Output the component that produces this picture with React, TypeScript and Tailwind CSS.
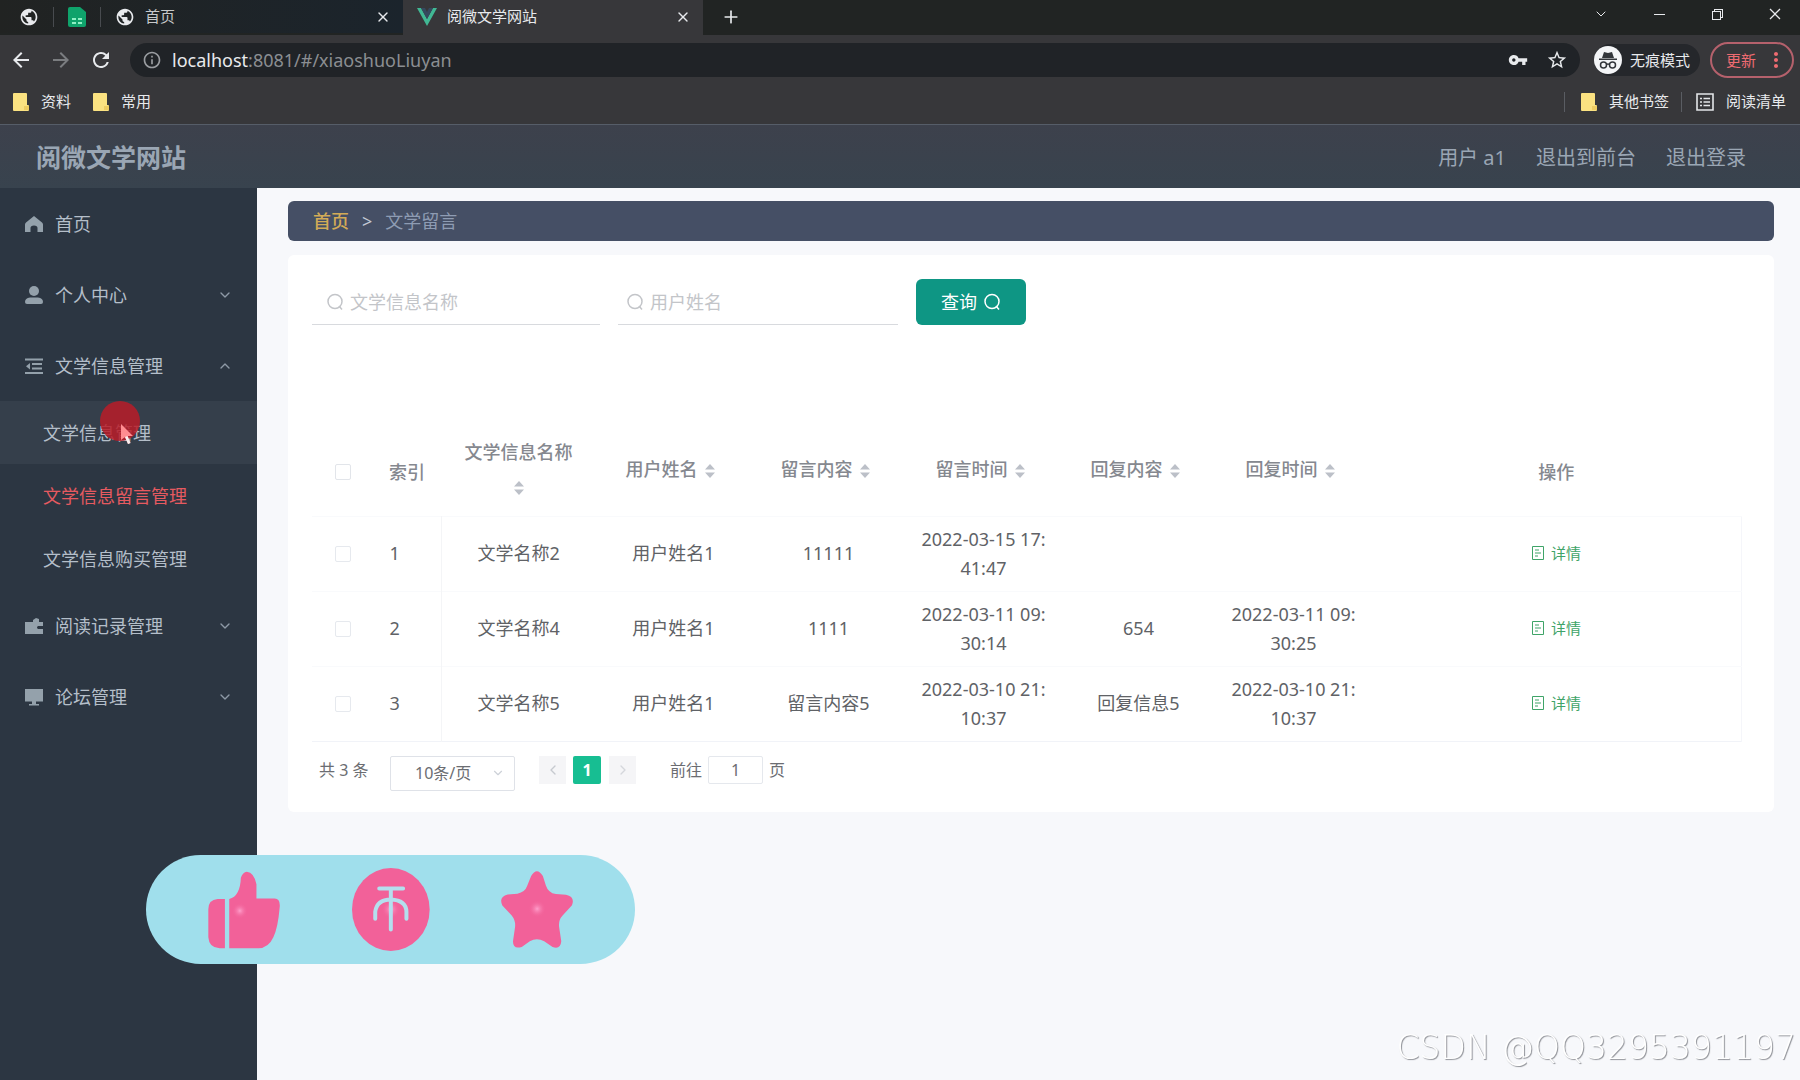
import React from 'react';
import {
  MdArrowBack,
  MdArrowForward,
  MdInfoOutline,
  MdMoreVert,
  MdPublic,
  MdRefresh,
  MdStarBorder,
  MdVpnKey,
} from 'react-icons/md';
import { VscChromeClose, VscChromeMinimize, VscChromeRestore } from 'react-icons/vsc';
import { ChevronDown, ChevronLeft, ChevronRight, ChevronUp, Plus, X } from 'lucide-react';

const rows = [
  { id: 1, name: '文学名称2', user: '用户姓名1', content: '11111', time: '2022-03-15 17:41:47', reply: '', replyTime: '' },
  { id: 2, name: '文学名称4', user: '用户姓名1', content: '1111', time: '2022-03-11 09:30:14', reply: '654', replyTime: '2022-03-11 09:30:25' },
  { id: 3, name: '文学名称5', user: '用户姓名1', content: '留言内容5', time: '2022-03-10 21:10:37', reply: '回复信息5', replyTime: '2022-03-10 21:10:37' },
];

const sortable = ['文学信息名称', '用户姓名', '留言内容', '留言时间', '回复内容', '回复时间'];

function FolderIcon() {
  return (
    <svg viewBox="0 0 16 18" className="w-4 h-[18px]">
      <path d="M1 0h12a1 1 0 0 1 1 1v11h1a1 1 0 0 1 1 1v4a1 1 0 0 1-1 1H1a1 1 0 0 1-1-1V1a1 1 0 0 1 1-1z" fill="#fbe281" />
      <path d="M11 13h5v4h-5z" fill="#efcd62" />
    </svg>
  );
}

function SheetIcon() {
  return (
    <svg viewBox="0 0 18 20" className="w-[18px] h-5">
      <path d="M2 0h10l6 5v13a2 2 0 0 1-2 2H2a2 2 0 0 1-2-2V2a2 2 0 0 1 2-2z" fill="#0fa36b" />
      <path d="M4 11h4v2H4zM10 11h4v2h-4zM4 15h4v2H4zM10 15h4v2h-4z" fill="#8ef0c4" />
    </svg>
  );
}

function VueIcon() {
  return (
    <svg viewBox="0 0 20 18" className="w-5 h-[18px]">
      <path d="M0 0h4l6 11L16 0h4L10 18z" fill="#41b894" />
      <path d="M4 0h4l2 4 2-4h4l-6 11z" fill="#35495e" />
    </svg>
  );
}

function IncognitoIcon() {
  return (
    <svg viewBox="0 0 28 28" className="w-7 h-7">
      <circle cx="14" cy="14" r="14" fill="#f4f5f7" />
      <path d="M10 6l4 1 4-1 2 6H8zM5 12.500h18v1.500H5z" fill="#33363b" />
      <g fill="none" stroke="#33363b" strokeWidth="1.500">
        <circle cx="9.500" cy="19" r="3" />
        <circle cx="18.500" cy="19" r="3" />
        <path d="M12.500 18.500q1.500-1 3 0" />
      </g>
    </svg>
  );
}

function ReadingListIcon() {
  return (
    <svg viewBox="0 0 18 18" className="w-[18px] h-[18px]" fill="none" stroke="#e4e6e9">
      <path d="M1 1h16v16H1z" strokeWidth="1.600" />
      <path d="M4 5.500h2M4 9h2M4 12.500h2M7.500 5.500h6.500M7.500 9h6.500M7.500 12.500h6.500" strokeWidth="1.500" />
    </svg>
  );
}

function HomeIcon() {
  return (
    <svg viewBox="0 0 18 18" className="w-[18px] h-[18px]" fill="currentColor">
      <path d="M9 1l8 6.500q1 1 1 2V17h-5.500v-4q0-2.500-3.500-2.500T5.500 13v4H0V9.500q0-1 1-2z" />
    </svg>
  );
}

function UserIcon() {
  return (
    <svg viewBox="0 0 18 18" className="w-[18px] h-[18px]" fill="currentColor">
      <ellipse cx="9" cy="5" rx="5" ry="5" />
      <path d="M5 11.500h8q5 .5 5 4.500 0 2-2 2H2q-2 0-2-2 0-4 5-4.500z" />
    </svg>
  );
}

function FoldIcon() {
  return (
    <svg viewBox="0 0 18 18" className="w-[18px] h-[18px]" fill="none" stroke="currentColor" strokeWidth="2">
      <path d="M0 2.500h18M7 7h10M7 11.500h10M0 16h18" />
      <path d="M5 6v6.500L1 9.200z" fill="currentColor" stroke="none" />
    </svg>
  );
}

function WalletIcon() {
  return (
    <svg viewBox="0 0 18 18" className="w-[18px] h-[18px]" fill="currentColor">
      <path d="M0 5h8V3l3-2 3 1v3h4v4h-5q-2 1.500 0 3h5v5H0z" />
    </svg>
  );
}

function MonitorIcon() {
  return (
    <svg viewBox="0 0 18 18" className="w-[18px] h-[18px]" fill="currentColor">
      <path d="M0 1h18v12.500H0zM7 13.500h4V16h3v1.500H4V16h3z" />
    </svg>
  );
}

function SearchIcon() {
  return (
    <svg viewBox="0 0 18 18" className="w-[18px] h-[18px] shrink-0" fill="none" stroke="currentColor" strokeWidth="1.500">
      <circle cx="9" cy="8.500" r="7" />
      <path d="M13 13l3 3.500" />
    </svg>
  );
}

function SortIcon() {
  return (
    <svg viewBox="0 0 12 14" className="w-3 h-3.5" fill="#bcc0c8">
      <path d="M6 0l5 5.500H1zM6 14l5-5.500H1z" />
    </svg>
  );
}

function DetailIcon() {
  return (
    <svg viewBox="0 0 14 14" className="w-3.5 h-3.5" fill="none" stroke="currentColor">
      <path d="M1.500.5h11v13h-11zM4 4h4M4 7h6M4 10h3" />
    </svg>
  );
}

function NavItem({ icon, label, arrow }: { icon: React.ReactNode; label: string; arrow?: 'up' | 'down' }) {
  return (
    <a href="#" className="h-[71px] pl-[25px] pr-6 flex items-center text-lg text-[#b4bec9]">
      <span className="w-[30px] text-[#94a1ab]">{icon}</span>
      <span className="flex-1">{label}</span>
      {arrow === 'down' && <ChevronDown className="w-4 h-4 text-[#8e9aa6]" strokeWidth={2} />}
      {arrow === 'up' && <ChevronUp className="w-4 h-4 text-[#8e9aa6]" strokeWidth={2} />}
    </a>
  );
}

function BrowserChrome() {
  return (
    <div className="bg-[#37373a] text-[15px] text-[#e8eaed] border-b border-[#565d68]">
      {/* Tabs */}
      <div className="h-[35px] pb-0.5 flex items-center bg-[#212423]">
        <div className="self-stretch w-[403px] pl-[19px] pr-3 flex items-center bg-gradient-to-r from-[#212322] to-[#1b242c]">
          <MdPublic className="w-5 h-5" />
          <span className="w-px h-5 ml-3.5 mr-3.5 bg-[#484b4f]" />
          <SheetIcon />
          <span className="w-px h-5 ml-3.5 mr-3.5 bg-[#484b4f]" />
          <MdPublic className="w-5 h-5" />
          <span className="flex-1 ml-2.5 text-[#c6c8ca]">首页</span>
          <button aria-label="关闭"><X className="w-4 h-4" strokeWidth={2} /></button>
        </div>
        <div className="self-stretch -mb-0.5 pb-0.5 w-[300px] pl-3.5 pr-3 flex items-center bg-[#37373a]">
          <VueIcon />
          <span className="flex-1 ml-2.5">阅微文学网站</span>
          <button aria-label="关闭"><X className="w-4 h-4" strokeWidth={2} /></button>
        </div>
        <button aria-label="新建标签页" className="ml-[18px]"><Plus className="w-5 h-5" strokeWidth={2} /></button>
        <div className="ml-auto pr-[17px] pb-1.5 flex items-center gap-[42px]">
          <ChevronDown className="w-4 h-4" strokeWidth={1.5} />
          <VscChromeMinimize className="w-4 h-4" />
          <VscChromeRestore className="w-4 h-4" />
          <VscChromeClose className="w-4 h-4" />
        </div>
      </div>

      {/* Address bar */}
      <div className="h-[50px] pl-[9px] pr-1.5 flex items-center">
        <button aria-label="后退"><MdArrowBack className="w-6 h-6" /></button>
        <button aria-label="前进" className="ml-4 text-[#7b7d80]"><MdArrowForward className="w-6 h-6" /></button>
        <button aria-label="刷新" className="ml-4"><MdRefresh className="w-6 h-6" /></button>
        <div className="ml-[17px] flex-1 h-[34px] pl-3 pr-3 flex items-center rounded-full bg-[#202327]">
          <MdInfoOutline className="w-5 h-5 text-[#9a9da1]" />
          <span className="flex-1 ml-2.5 text-lg text-[#8b8e92]">
            <span className="text-[#e8eaed]">localhost</span>:8081/#/xiaoshuoLiuyan
          </span>
          <MdVpnKey className="w-5 h-5" />
          <MdStarBorder className="w-[22px] h-[22px] ml-[18px]" />
        </div>
        <div className="ml-3.5 h-8 pr-2.5 flex items-center gap-2 rounded-full bg-[#25272b]">
          <IncognitoIcon />
          <span>无痕模式</span>
        </div>
        <button className="ml-2.5 h-9 w-[84px] pl-3.5 flex items-center rounded-full border-2 border-[#b5616c] text-[#ee6b71]">
          更新
          <MdMoreVert className="w-6 h-6 ml-2" />
        </button>
      </div>

      {/* Bookmarks */}
      <div className="h-[39px] pb-1.5 pl-[13px] pr-3.5 flex items-center">
        <FolderIcon />
        <span className="ml-3">资料</span>
        <span className="ml-[22px]"><FolderIcon /></span>
        <span className="ml-3">常用</span>
        <span className="ml-auto w-px h-5 bg-[#5a5d63]" />
        <span className="ml-4"><FolderIcon /></span>
        <span className="ml-3">其他书签</span>
        <span className="ml-3 w-px h-5 bg-[#5a5d63]" />
        <span className="ml-3.5"><ReadingListIcon /></span>
        <span className="ml-3">阅读清单</span>
      </div>
    </div>
  );
}

function Sidebar() {
  return (
    <nav className="w-[257px] shrink-0 bg-[#2c3642]">
      <NavItem icon={<HomeIcon />} label="首页" />
      <NavItem icon={<UserIcon />} label="个人中心" arrow="down" />
      <NavItem icon={<FoldIcon />} label="文学信息管理" arrow="up" />
      <div className="text-lg text-[#b4bec9]">
        <a href="#" className="relative h-[63px] pl-[43px] flex items-center bg-[#353f4b]">
          文学信息管理
          <span className="absolute left-[100px] top-0 w-10 h-10 rounded-full bg-[#b81c28]/85" />
          <svg viewBox="0 0 14 22" className="absolute left-[120px] top-[22px] w-3.5 h-[22px]">
            <path d="M1 1v16l4-3 3 7 2.500-1-3-7H13z" fill="#ff8d91" />
            <path d="M5 14l3 7 2.500-1-3-7z" fill="#f6f0f1" />
          </svg>
        </a>
        <a href="#" className="h-[63px] pl-[43px] flex items-center text-[#e65a60]">文学信息留言管理</a>
        <a href="#" className="h-[63px] pl-[43px] flex items-center">文学信息购买管理</a>
      </div>
      <NavItem icon={<WalletIcon />} label="阅读记录管理" arrow="down" />
      <NavItem icon={<MonitorIcon />} label="论坛管理" arrow="down" />
    </nav>
  );
}

function MessageTable() {
  return (
    <table className="w-full table-fixed text-lg text-center text-[#606266] border-b border-[#f1f3f8]">
      <colgroup>
        <col className="w-[61px]" />
        <col className="w-[68px]" />
        {sortable.map((s) => (
          <col key={s} className="w-[155px]" />
        ))}
        <col />
      </colgroup>
      <thead className="text-[#85888f]">
        <tr className="h-[87px]">
          <th className="align-middle">
            <input type="checkbox" aria-label="全选" className="block mx-auto appearance-none w-4 h-4 border border-[#e2e5ea] rounded-xs" />
          </th>
          <th className="font-medium">索引</th>
          {sortable.map((s) => (
            <th key={s} className="px-3 pb-1.5 font-medium leading-[34px]">
              <span>{s}</span>
              <button aria-label={s + '排序'} className="inline-flex w-6 h-3.5 justify-center align-middle"><SortIcon /></button>
            </th>
          ))}
          <th className="font-medium">操作</th>
        </tr>
      </thead>
      <tbody className="border-r border-[#f5f6fa]">
        {rows.map((r) => (
          <tr key={r.id} className="h-[75px] border-t border-[#f9fafc] leading-[29px] break-all">
            <td>
              <input type="checkbox" aria-label={'选择' + r.id} className="block mx-auto appearance-none w-4 h-4 border border-[#e6e9ee] rounded-xs" />
            </td>
            <td className="pr-6 border-r border-[#f4f5f7]">{r.id}</td>
            <td className="px-3">{r.name}</td>
            <td className="px-3">{r.user}</td>
            <td className="px-3">{r.content}</td>
            <td className="px-3">{r.time}</td>
            <td className="px-3">{r.reply}</td>
            <td className="px-3">{r.replyTime}</td>
            <td>
              <button className="inline-flex items-center gap-1.5 text-[15px] text-[#3fa468]">
                <DetailIcon />
                详情
              </button>
            </td>
          </tr>
        ))}
      </tbody>
    </table>
  );
}

function Pagination() {
  return (
    <div className="mt-3.5 pl-[7px] h-[36px] flex items-start text-base text-[#6b6d72]">
      <span className="w-[71px] h-7 flex items-center">共 3 条</span>
      <div className="relative">
        <select aria-label="每页条数" className="block appearance-none w-[125px] h-[35px] pl-6 text-base bg-white border border-[#dfe2e8] rounded-xs">
          <option>10条/页</option>
        </select>
        <ChevronDown className="absolute right-2.5 top-2.5 w-3.5 h-3.5 text-[#cdd1d8] pointer-events-none" strokeWidth={2} />
      </div>
      <button aria-label="上一页" className="ml-6 w-[27px] h-7 flex items-center justify-center bg-[#f5f5f7] text-[#c6c9cf]">
        <ChevronLeft className="w-4 h-4" />
      </button>
      <button className="ml-[7px] w-7 h-7 bg-[#17be92] text-white font-bold rounded-xs">1</button>
      <button aria-label="下一页" className="ml-2 w-[27px] h-7 flex items-center justify-center bg-[#f5f5f7] text-[#d5d7dc]">
        <ChevronRight className="w-4 h-4" />
      </button>
      <label className="ml-[34px] flex items-center">
        前往
        <input type="text" defaultValue="1" className="mx-1.5 w-[55px] h-7 text-center bg-white border border-[#e5e8ed] rounded-xs" />
        页
      </label>
    </div>
  );
}

function LikeBar() {
  return (
    <div className="fixed left-[146px] bottom-[116px] w-[489px] h-[109px] flex items-center justify-between pl-[62px] pr-[62px] rounded-full bg-[#a0dfec]">
      <svg viewBox="233 90 217 235" className="w-[72px] h-[78px]">
        <defs>
          <radialGradient id="glow">
            <stop offset="0" stopColor="#ff9fcb" />
            <stop offset="1" stopColor="#f26199" stopOpacity="0" />
          </radialGradient>
        </defs>
        <path
          d="M284 174H262Q234 176 234 205V290Q236 322 268 323H284ZM297 174Q330 166 332 110Q338 93 350 92Q372 94 379 130V173H434Q452 174 449 200Q444 260 430 290Q415 323 385 323H297Z"
          fill="#f26199"
        />
        <circle cx="329" cy="210" r="24" fill="url(#glow)" />
      </svg>
      <svg viewBox="665 83 235 250" className="w-[78px] h-[83px]">
        <ellipse cx="782" cy="208" rx="117" ry="125" fill="#f26199" />
        <circle cx="782" cy="208" r="28" fill="url(#glow)" />
        <path
          d="M747 145H819M782 145V268M735 236V215Q740 178 782 178Q828 180 829 215V236"
          fill="none"
          stroke="#b4dfee"
          strokeWidth="12"
          strokeLinecap="round"
        />
      </svg>
      <svg viewBox="1116 95 215 230" className="w-[72px] h-[77px]">
        <path
          d="M1206 110Q1223 82 1241 110L1250 138Q1257 160 1280 164L1310 166Q1338 172 1328 197L1300 228Q1286 243 1290 265L1296 305Q1294 330 1270 322L1245 305Q1223 292 1202 305L1178 322Q1150 330 1152 303L1158 262Q1160 243 1148 228L1120 198Q1108 172 1136 165L1165 163Q1188 158 1194 140Z"
          fill="#f26199"
        />
        <circle cx="1224" cy="208" r="26" fill="url(#glow)" />
      </svg>
    </div>
  );
}

export default function App() {
  return (
    <div className="min-h-screen flex flex-col font-['Noto_Sans','Noto_Sans_CJK_SC',sans-serif]">
      <BrowserChrome />

      {/* Site header */}
      <header className="h-[63px] pt-0.5 pl-9 pr-[54px] flex items-center bg-gradient-to-b from-[#3d414c] to-[#38434e] text-[#9aa6b4]">
        <h1 className="flex-1 text-[25px] font-bold">阅微文学网站</h1>
        <div className="flex items-center gap-[30px] text-xl">
          <span>用户 a1</span>
          <a href="#">退出到前台</a>
          <a href="#">退出登录</a>
        </div>
      </header>

      <div className="flex-1 flex">
        <Sidebar />
        <main className="flex-1 min-w-0 pt-[13px] pl-[31px] pr-[26px] bg-[#f7f8fb]">
          <div className="h-10 px-[25px] flex items-center gap-[13px] rounded-md bg-[#454f65] text-lg text-[#8e9cb3]">
            <a href="#" className="font-medium text-[#d3ab57]">首页</a>
            <span className="text-[#c3cad6]">&gt;</span>
            <span>文学留言</span>
          </div>

          <section className="mt-3.5 pt-6 px-6 pb-5 bg-white rounded-md">
            {/* Search form */}
            <form className="flex h-[46px] gap-[18px] text-lg text-[#c3c5c9]">
              <label className="w-[288px] pl-3.5 flex items-center gap-1.5 border-b border-[#d8dade]">
                <SearchIcon />
                <input type="text" placeholder="文学信息名称" aria-label="文学信息名称" className="w-full bg-transparent outline-none placeholder:text-[#c3c5c9]" />
              </label>
              <label className="w-[280px] pl-2 flex items-center gap-1.5 border-b border-[#d8dade]">
                <SearchIcon />
                <input type="text" placeholder="用户姓名" aria-label="用户姓名" className="w-full bg-transparent outline-none placeholder:text-[#c3c5c9]" />
              </label>
              <button type="button" className="w-[110px] flex items-center justify-center gap-1.5 rounded-md bg-[#0e9684] text-white">
                查询
                <SearchIcon />
              </button>
            </form>

            <div className="mt-[104px] pr-2">
              <MessageTable />
            </div>
            <Pagination />
          </section>
        </main>
      </div>

      <LikeBar />
      <div className="fixed right-1 bottom-3 text-[33px] leading-10 font-['DejaVu_Sans'] font-extralight text-white [text-shadow:1px_1px_1px_#8e9096]">
        CSDN @QQ3295391197
      </div>
    </div>
  );
}
